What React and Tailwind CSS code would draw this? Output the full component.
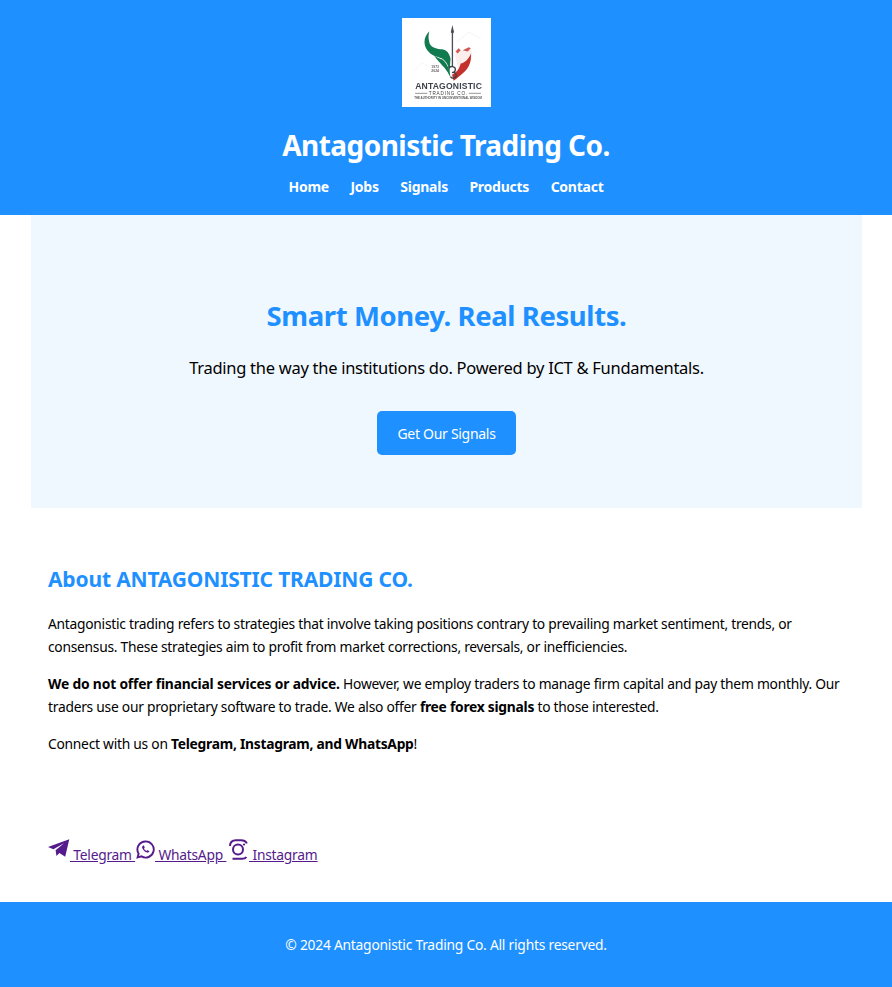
import React from "react";

const lf = "Liberation Sans, sans-serif";

function Logo() {
  return (
    <svg width="89" height="89" viewBox="0 0 88 88" className="block blur-[0.35px]">
      <rect width="88" height="88" fill="#fff" />
      <path d="M54 24L66 14L78 20M12 52L20 44L26 48" fill="none" stroke="#f0f0f0" strokeWidth="0.7" />
      <path d="M27 13C21 19 20 28 28 35C33 39 39 38 42 42C45 45 46 48 47 53L48 40C46 33 43 31 38 31C33 30 28 29 27 24C26 20 26 17 27 13Z" fill="#117a4e" />
      <path d="M31 36C36 44 42 48 44 52C46 55 47 57 48 59L47 52C45 47 43 43 40 41C37 40 34 39 31 36Z" fill="#117a4e" />
      <path d="M49.800 7L51.500 14L50.500 15L50.500 48L49.200 48L49.200 15L48.200 14Z" fill="#4a4f57" />
      <path d="M53 33L56 30L59 32C62 32 64 32 65 31L68 29L69 34C70 42 66 48 62 53C58 57 54 60 51 62L50 55C54 54 56 50 55 46C54 43 52 38 53 33Z" fill="#fbeeec" />
      <path d="M68 35C69 43 66 49 62 53C58 57 54 60 51 62L49.500 56C54 54 57 50 58 45C62 44 66 41 68 35Z" fill="#c4302b" />
      <path d="M53 33L56 30L58 32L55 35ZM60 32L66 29L68 30L65 33Z" fill="#cf5a52" />
      <path d="M46 50a3.500 3 0 1 1 3.500 4a3 2.800 0 1 1 -1.500 4" fill="none" stroke="#3d4047" strokeWidth="1.300" />
      <text x="29" y="49" fontSize="3.400" fontWeight="700" fontFamily={lf} fill="#666">1973</text>
      <text x="29" y="53.500" fontSize="3.400" fontWeight="700" fontFamily={lf} fill="#666">2024</text>
      <text x="46" y="70.500" textAnchor="middle" fontSize="8.500" fontWeight="700" fontFamily={lf} fill="#3d4149" textLength="66">ANTAGONISTIC</text>
      <path d="M13 74.500H25M66 74.500H78" stroke="#555" strokeWidth="0.6" />
      <text x="45.500" y="76" textAnchor="middle" fontSize="4.600" fontFamily={lf} fill="#444" textLength="38">TRADING CO.</text>
      <text x="45.500" y="80.500" textAnchor="middle" fontSize="2.800" fontWeight="700" fontFamily={lf} fill="#555" textLength="67">THE AUTHORITY IN UNCONVENTIONAL WISDOM</text>
    </svg>
  );
}

function TelegramIcon() {
  return (
    <svg width="22" height="18" viewBox="0 0 22 18" fill="currentColor" className="inline-block align-[3px]">
      <path d="M21.300 0.200L17.200 17.800L11.400 14L8.500 17L7.600 11.200L16 4.200L5.400 10.200L0 8Z" />
    </svg>
  );
}

function WhatsAppIcon() {
  return (
    <svg width="19" height="19" viewBox="0 0 24 24" fill="none" stroke="currentColor" strokeWidth="2.400" className="inline-block ml-[1px] align-[1px]">
      <path d="M12 1.800A10.200 10.200 0 0 0 3.300 17.300L2 22l4.900-1.300A10.200 10.200 0 1 0 12 1.800Z" />
      <path d="M8.700 7.200c-.8.600-1.200 1.500-.9 2.600.7 2.700 3.500 5.400 6.300 6.100 1.100.3 2-.2 2.600-1 .2-.4.100-.8-.2-1l-1.700-.9c-.4-.2-.7-.1-1 .2l-.6.700c-1.400-.6-2.500-1.700-3.100-3.100l.6-.6c.3-.3.4-.6.200-1l-.8-1.800c-.2-.4-.9-.5-1.400-.2Z" fill="currentColor" stroke="none" />
    </svg>
  );
}

function InstagramIcon() {
  return (
    <svg width="19" height="21" viewBox="0 0 19 21" fill="none" stroke="currentColor" className="inline-block ml-[3px] mr-[1px] align-[0px]">
      <circle cx="9" cy="10.500" r="5" strokeWidth="2" />
      <path d="M1 7C1 3 3 1.200 7 1.200H12C15 1.200 17 2.200 17.800 4.500" strokeWidth="2" />
      <path d="M3.500 19.800H13C15 19.800 16.500 19.300 17.500 18" strokeWidth="2" />
      <circle cx="15" cy="5.500" r="1.100" fill="currentColor" stroke="none" />
    </svg>
  );
}

export default function App() {
  return (
    <div className="font-['Noto_Sans','Open_Sans',sans-serif] text-black bg-white">
      <header className="bg-[#1e90ff] text-white text-center pt-[18px] h-[215px]">
        <div className="flex justify-center">
          <Logo />
        </div>
        <h1 className="mt-[19px] text-[28px] leading-[38px] font-bold tracking-[-0.55px]">Antagonistic Trading Co.</h1>
        <nav className="mt-[13px] flex justify-center gap-[21.500px] text-[14px] leading-[20px] font-bold tracking-[-0.25px]">
          <a href="#">Home</a>
          <a href="#">Jobs</a>
          <a href="#">Signals</a>
          <a href="#">Products</a>
          <a href="#">Contact</a>
        </nav>
      </header>

      <main className="pl-[31px] pr-[30px]">
        <section className="bg-[#f0f8ff] h-[293px] pt-[82px] text-center flex flex-col items-center">
          <h2 className="text-[27.500px] leading-[38px] font-bold text-[#1e90ff] tracking-[-0.4px]">Smart Money. Real Results.</h2>
          <p className="mt-[21px] text-[16.500px] leading-[24px] tracking-[-0.28px]">Trading the way the institutions do. Powered by ICT &amp; Fundamentals.</p>
          <a href="#" className="mt-[31px] w-[139px] h-[44px] flex items-center justify-center bg-[#1e90ff] text-white rounded-[5px] text-[14px] tracking-[-0.29px]">Get Our Signals</a>
        </section>

        <section className="px-[17px] pt-[56px]">
          <h2 className="text-[21px] leading-[30px] font-bold text-[#1e90ff] tracking-[-0.17px]">About ANTAGONISTIC TRADING CO.</h2>
          <p className="mt-[18px] text-[13.800px] leading-[23px] tracking-[-0.26px]">Antagonistic trading refers to strategies that involve taking positions contrary to prevailing market sentiment, trends, or consensus. These strategies aim to profit from market corrections, reversals, or inefficiencies.</p>
          <p className="mt-[14px] text-[13.800px] leading-[23px] tracking-[-0.25px]"><strong className="tracking-[-0.16px]">We do not offer financial services or advice.</strong> However, we employ traders to manage firm capital and pay them monthly. Our traders use our proprietary software to trade. We also offer <strong>free forex signals</strong> to those interested.</p>
          <p className="mt-[14px] text-[13.800px] leading-[23px] tracking-[-0.25px]">Connect with us on <strong>Telegram, Instagram, and WhatsApp</strong>!</p>
          <div className="mt-[84px] h-[48px] text-[13.800px] leading-[23px] tracking-[-0.25px] text-[#551a8b] underline whitespace-pre">
            <a href="#"><TelegramIcon /> Telegram </a>
            <a href="#"><WhatsAppIcon /> WhatsApp </a>
            <a href="#"><InstagramIcon /> Instagram</a>
          </div>
        </section>
      </main>

      <footer className="mt-[15px] h-[85px] pt-[2px] bg-[#1e90ff] text-white flex items-center justify-center text-[13.800px] tracking-[-0.22px]">
        © 2024 Antagonistic Trading Co. All rights reserved.
      </footer>
    </div>
  );
}
